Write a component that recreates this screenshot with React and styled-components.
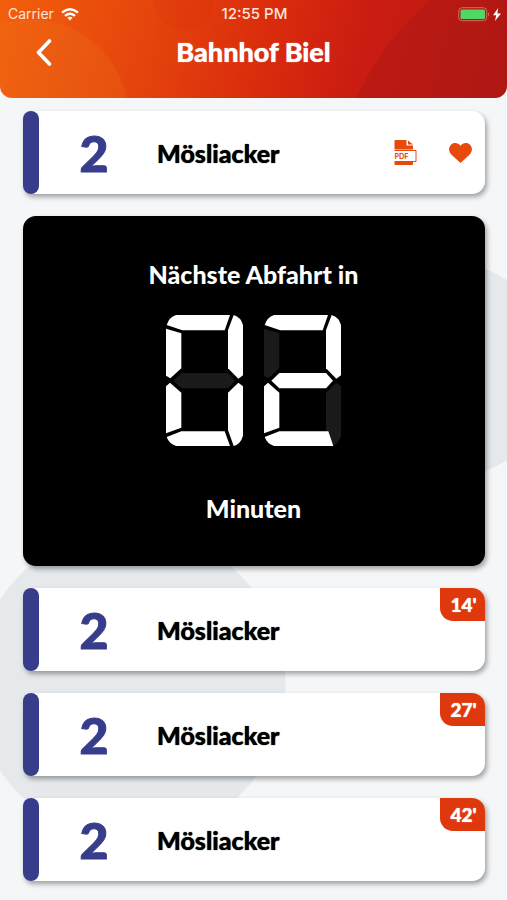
import React from "react";
import styled, { createGlobalStyle } from "styled-components";

const GlobalStyle = createGlobalStyle`
  * { box-sizing: border-box; }
  body {
    margin: 0;
    background: #f4f6f8;
    font-family: Lato, "Liberation Sans", sans-serif;
  }
  button { border: 0; padding: 0; background: none; color: inherit; font: inherit; cursor: pointer; }
`;

const Screen = styled.div`
  min-height: 100vh;
  background:
    radial-gradient(circle at 130px 685px, #e5e9eb 155px, transparent 156px),
    radial-gradient(circle at calc(100% - 61px) 370px, #e5e9eb 108px, transparent 109px),
    #f4f6f8;
`;

const Header = styled.header`
  color: #fff;
  border-radius: 0 0 12px 12px;
  overflow: hidden;
  background:
    radial-gradient(circle at 30px 118px, rgba(235, 120, 30, 0.22) 98px, transparent 99px),
    radial-gradient(circle at calc(100% + 122px) 228px, rgba(155, 22, 20, 0.3) 302px, transparent 303px),
    radial-gradient(circle at 184px 0, rgba(205, 30, 10, 0.1) 30px, transparent 31px),
    linear-gradient(105deg, #f25f0c 0%, #e5440c 30%, #da2c0c 52%, #cb1c12 70%, #b81812 100%);
`;

const StatusBar = styled.div`
  display: grid;
  grid-template-columns: 1fr auto 1fr;
  align-items: center;
  height: 28px;
  padding: 0 6px 0 8px;
  font: 400 14px/28px Inter, sans-serif;
  color: #ffe3d8;
`;

const StatusGroup = styled.div`
  display: flex;
  align-items: center;
  justify-content: ${(p) => (p.$end ? "flex-end" : "flex-start")};
  gap: ${(p) => (p.$end ? 3 : 7)}px;
`;

const Clock = styled.time`
  font-size: 15px;
  font-weight: 500;
`;

const TitleBar = styled.div`
  display: grid;
  grid-template-columns: 44px 1fr 44px;
  align-items: center;
  height: 70px;
  padding: 0 22px 22px;
`;

const BackButton = styled.button`
  display: flex;
  justify-content: center;
  align-items: center;
  height: 44px;
`;

const Title = styled.h1`
  margin: 0;
  text-align: center;
  font-size: 27px;
  line-height: 32px;
  font-weight: 900;
  text-shadow: 0 0 1px currentColor;
`;

const Content = styled.main`
  display: flex;
  flex-direction: column;
  gap: 22px;
  padding: 13px 22px 18px 23px;
`;

const Card = styled.article`
  position: relative;
  display: flex;
  align-items: center;
  height: 83px;
  background: #fff;
  border-radius: 8px 13px 13px 8px;
  box-shadow: 2px 3px 5px rgba(0, 0, 0, 0.35);
`;

const LineStripe = styled.span`
  align-self: stretch;
  width: 16px;
  border-radius: 8px;
  background: #373d8b;
`;

const LineNumber = styled.span`
  width: 110px;
  text-align: center;
  color: #373d8b;
  font-size: 50px;
  line-height: 60px;
  font-weight: 900;
  -webkit-text-stroke: 1px currentColor;
`;

const Destination = styled.h2`
  flex: 1;
  margin: 0 0 0 8px;
  color: #000;
  font-size: 25px;
  line-height: 30px;
  font-weight: 900;
  text-shadow: 0 0 1px currentColor;
`;

const Actions = styled.div`
  display: flex;
  gap: 24px;
  padding-right: 9px;
  color: #e64a0c;
`;

const IconButton = styled.button`
  display: flex;
  align-items: center;
  justify-content: center;
  width: 31px;
  height: 32px;
`;

const Minutes = styled.span`
  position: absolute;
  top: 0;
  right: 0;
  width: 45px;
  padding-left: 2px;
  border-radius: 0 13px 0 13px;
  background: #e0380d;
  color: #fff;
  text-align: center;
  font-size: 19px;
  line-height: 33px;
  font-weight: 900;
  text-shadow: 0 0 1px currentColor;
`;

const Countdown = styled.section`
  display: flex;
  flex-direction: column;
  align-items: center;
  padding: 43px 1px 43px 0;
  border-radius: 13px;
  background: #000;
  color: #fff;
  box-shadow: 2px 3px 5px rgba(0, 0, 0, 0.35);
`;

const CountdownLabel = styled.p`
  margin: 0;
  font-size: 25px;
  line-height: 30px;
  font-weight: 900;
`;

const Digits = styled.div`
  display: flex;
  gap: 21px;
  margin: 26px 0 47px;
`;

const SEGMENTS = {
  top: "M2 30Q9 7 30 0H192L176 46H49Z",
  upperLeft: "M0 41L46 55V160L13 190L0 182Z",
  upperRight: "M203 0Q224 6 231 30V181L217 191L186 160V46Z",
  middle: "M22 197L46 174H186L207 197L186 220H46Z",
  lowerLeft: "M12 203L46 233V338L0 355V214Z",
  lowerRight: "M217 203L231 214V362Q224 387 203 393L186 345V233Z",
  bottom: "M2 366L46 349H176L192 393H30Q9 386 2 366Z",
};
const OPEN_BOTTOM = "M2 366L46 349H193L208 393H30Q9 386 2 366Z";

const LIT = {
  0: ["top", "upperLeft", "upperRight", "lowerLeft", "lowerRight", "bottom"],
  2: ["top", "upperRight", "middle", "lowerLeft", "bottom"],
};

function Digit({ value }) {
  const lit = LIT[value];
  const names = Object.keys(SEGMENTS);
  return (
    <svg width="77" height="131" viewBox="0 0 231 393" aria-hidden="true">
      {names.map((name) => (
        <path
          key={name}
          fill={lit.includes(name) ? "#fff" : "#1a1a1a"}
          d={name === "bottom" && !lit.includes("lowerRight") ? OPEN_BOTTOM : SEGMENTS[name]}
        />
      ))}
    </svg>
  );
}

const WifiIcon = () => (
  <svg width="18" height="13" viewBox="0 0 18 13" fill="none" stroke="#fff" strokeWidth="2.3" aria-hidden="true">
    <path d="M1 4.6Q9-2.2 17 4.6" />
    <path d="M4 7.8Q9 3.6 14 7.8" />
    <path d="M6.3 9.8Q9 7.6 11.7 9.8L9 12.6Z" fill="#fff" stroke="none" />
  </svg>
);

const BatteryIcon = () => (
  <svg width="32" height="15" viewBox="0 0 32 15" aria-hidden="true">
    <rect x="0.7" y="0.7" width="28" height="13" rx="3.5" fill="none" stroke="#dd6a5a" />
    <rect x="2.5" y="2.5" width="24.5" height="9.5" rx="1.5" fill="#4fd863" />
    <path d="M30 5Q32 7.3 30 9.5Z" fill="#dd6a5a" />
  </svg>
);

const BoltIcon = () => (
  <svg width="8" height="13" viewBox="0 0 8 13" fill="#fff" aria-hidden="true">
    <path d="M5.2 0L0 7.3H3.2L2 13L8 5.4H4.4Z" />
  </svg>
);

const BackIcon = () => (
  <svg width="16" height="27" viewBox="0 0 16 27" fill="none" stroke="#fff" strokeWidth="3.6" strokeLinecap="round" strokeLinejoin="round" aria-hidden="true">
    <path d="M13.5 2L2.5 13.5L13.5 25" />
  </svg>
);

const PdfLabel = styled.text`
  font: 900 7px Lato, sans-serif;
`;

const PdfIcon = () => (
  <svg width="23" height="26" viewBox="0 0 23 26" fill="currentColor" aria-hidden="true">
    <path d="M1 0H12.5V5.5H19V9.5H0.5V1Z" />
    <path d="M14 0.5L19 4.5H14Z" />
    <path d="M0.5 22H19V24Q19 25 18 25H1.5Q0.5 25 0.5 24Z" />
    <path d="M0.5 10.5H22V21.5H0.5" fill="#fff" stroke="currentColor" />
    <path d="M0 11H1V21H0Z" fill="#fff" />
    <PdfLabel x="0.5" y="18.5">PDF</PdfLabel>
  </svg>
);

const HeartIcon = () => (
  <svg width="23" height="20" viewBox="0 0 23 20" fill="currentColor" aria-hidden="true">
    <path d="M11.5 20L2 11.2C-0.4 8.6-0.6 4.3 1.8 1.9C4.5-0.8 8.9-0.5 11.5 2.7C14.1-0.5 18.5-0.8 21.2 1.9C23.6 4.3 23.4 8.6 21 11.2Z" />
  </svg>
);

const DEPARTURES = [14, 27, 42];

function LineCard({ minutes, children }) {
  return (
    <Card>
      <LineStripe />
      <LineNumber>2</LineNumber>
      <Destination>Mösliacker</Destination>
      {minutes && <Minutes>{minutes}'</Minutes>}
      {children}
    </Card>
  );
}

export default function App() {
  return (
    <Screen>
      <GlobalStyle />
      <Header>
        <StatusBar>
          <StatusGroup>
            Carrier
            <WifiIcon />
          </StatusGroup>
          <Clock>12:55 PM</Clock>
          <StatusGroup $end>
            <BatteryIcon />
            <BoltIcon />
          </StatusGroup>
        </StatusBar>
        <TitleBar>
          <BackButton aria-label="Zurück">
            <BackIcon />
          </BackButton>
          <Title>Bahnhof Biel</Title>
        </TitleBar>
      </Header>
      <Content>
        <LineCard>
          <Actions>
            <IconButton aria-label="Fahrplan als PDF">
              <PdfIcon />
            </IconButton>
            <IconButton aria-label="Favorit">
              <HeartIcon />
            </IconButton>
          </Actions>
        </LineCard>
        <Countdown>
          <CountdownLabel>Nächste Abfahrt in</CountdownLabel>
          <Digits role="img" aria-label="02">
            <Digit value={0} />
            <Digit value={2} />
          </Digits>
          <CountdownLabel>Minuten</CountdownLabel>
        </Countdown>
        {DEPARTURES.map((minutes) => (
          <LineCard key={minutes} minutes={minutes} />
        ))}
      </Content>
    </Screen>
  );
}
